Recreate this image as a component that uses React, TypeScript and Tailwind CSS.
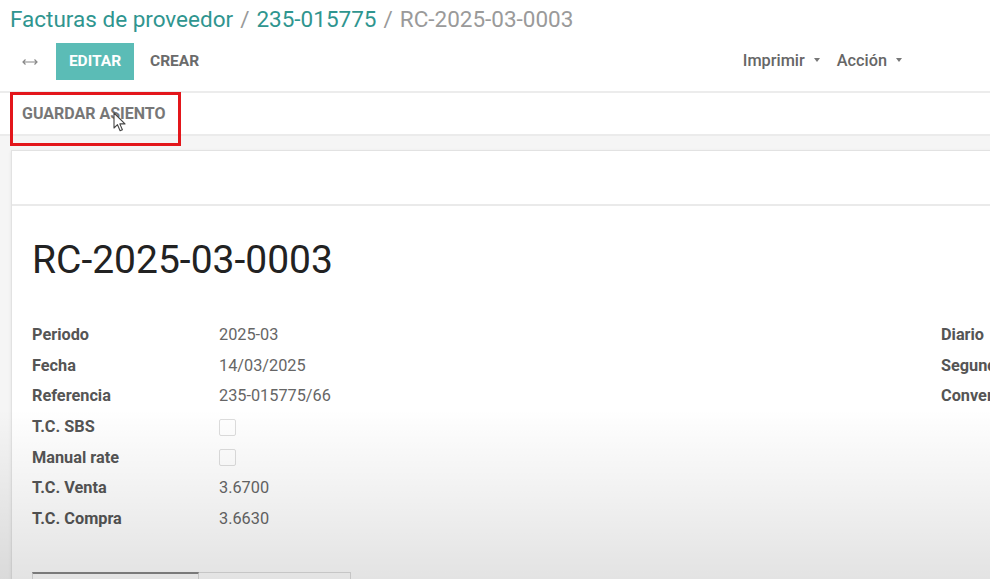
import { ReactNode } from "react";

const leftFields: { label: string; value?: string; check?: boolean }[] = [
  { label: "Periodo", value: "2025-03" },
  { label: "Fecha", value: "14/03/2025" },
  { label: "Referencia", value: "235-015775/66" },
  { label: "T.C. SBS", check: true },
  { label: "Manual rate", check: true },
  { label: "T.C. Venta", value: "3.6700" },
  { label: "T.C. Compra", value: "3.6630" },
];

const rightFields = ["Diario", "Segundo", "Conversión"];

function Caret() {
  return <span className="ml-[9px] inline-block border-x-[3.5px] border-t-[4px] border-x-transparent border-t-[#777] align-middle mb-[3px]" />;
}

function Row({ children }: { children: ReactNode }) {
  return <div className="h-[30.67px] flex items-center">{children}</div>;
}

export default function App() {
  return (
    <div
      className="relative w-[990px] h-[579px] overflow-hidden bg-white"
      style={{ fontFamily: "Roboto, 'Noto Sans', sans-serif" }}
    >
      {/* control panel */}
      <div className="border-b-2 border-[#ececec] pb-[11px]">
        <div className="h-[43px] px-[10px] pt-[4px] text-[22.5px] leading-[30px] whitespace-nowrap">
          <span className="text-[#2f958f]">Facturas de proveedor</span>
          <span className="text-[#999] mx-[7px]">/</span>
          <span className="text-[#2f958f]">235-015775</span>
          <span className="text-[#999] mx-[7px]">/</span>
          <span className="text-[#9a9a9a]">RC-2025-03-0003</span>
        </div>
        <div className="h-[37px] flex items-center px-[10px]">
          <div className="w-[46px] flex items-center pl-[12px]">
            <svg width="16" height="8" viewBox="0 0 16 8" fill="none" stroke="#888" strokeWidth="1.2">
              <path d="M1 4h14M3.5 1.5 1 4l2.5 2.5M12.5 1.5 15 4l-2.5 2.5" />
            </svg>
          </div>
          <button className="h-[37px] w-[78px] bg-[#5bbcb6] text-white text-[15.5px] font-bold">
            EDITAR
          </button>
          <button className="ml-[16px] text-[#6b6b6b] text-[15.5px] font-bold">CREAR</button>
          <div className="ml-auto flex items-center gap-[17px] pr-[78px] text-[16.3px] font-medium text-[#666]">
            <span>
              Imprimir
              <Caret />
            </span>
            <span>
              Acción
              <Caret />
            </span>
          </div>
        </div>
      </div>

      {/* statusbar */}
      <div className="h-[43px] border-b-2 border-[#ebebeb] flex items-center px-[22px] pt-[1px]">
        <span className="text-[16px] font-bold text-[#777]">GUARDAR ASIENTO</span>
      </div>

      {/* sheet background */}
      <div className="bg-[#f5f5f5] pt-[14px] pl-[11px]">
        <div className="w-[1400px] bg-white border border-[#e2e2e2] shadow-[0_1px_3px_rgba(0,0,0,0.08)]">
          <div className="h-[55px] border-b-2 border-[#eaeaea]" />
          <div className="px-[20px] pt-[32px]">
            <h1 className="h-[44px] text-[39px] leading-[44px] text-[#222]">RC-2025-03-0003</h1>
            <div className="mt-[38px] flex">
              <div className="w-[909px]">
                {leftFields.map((f) => (
                  <Row key={f.label}>
                    <span className="w-[187px] text-[16.3px] font-bold text-[#555]">{f.label}</span>
                    {f.check ? (
                      <span className="w-[17px] h-[17px] border border-[#ddd] rounded-[2px] bg-white" />
                    ) : (
                      <span className="text-[16.3px] text-[#666]">{f.value}</span>
                    )}
                  </Row>
                ))}
              </div>
              <div>
                {rightFields.map((l) => (
                  <Row key={l}>
                    <span className="text-[16.3px] font-bold text-[#555]">{l}</span>
                  </Row>
                ))}
              </div>
            </div>
            <div className="mt-[37px] flex">
              <div className="w-[167px] h-[20px] border-t-2 border-x border-t-[#888] border-x-[#ddd]" />
              <div className="w-[152px] h-[20px] border-t border-r border-[#ddd]" />
            </div>
          </div>
        </div>
      </div>

      {/* video vignette at the bottom */}
      <div className="pointer-events-none absolute inset-x-0 bottom-0 h-[170px] bg-gradient-to-b from-transparent to-black/[0.11]" />

      {/* highlight box */}
      <div className="pointer-events-none absolute left-[10px] top-[92px] w-[171px] h-[54px] border-[3px] border-[#e3161b]" />

      {/* mouse cursor */}
      <svg
        className="pointer-events-none absolute left-[113px] top-[112px]"
        width="14"
        height="21"
        viewBox="0 0 14 21"
      >
        <path
          d="M1 1v15l3.5-3.3 2.6 6.1 2.3-1-2.6-5.9H12z"
          fill="#fff"
          stroke="#444"
          strokeWidth="1.1"
          strokeLinejoin="round"
        />
      </svg>
    </div>
  );
}
